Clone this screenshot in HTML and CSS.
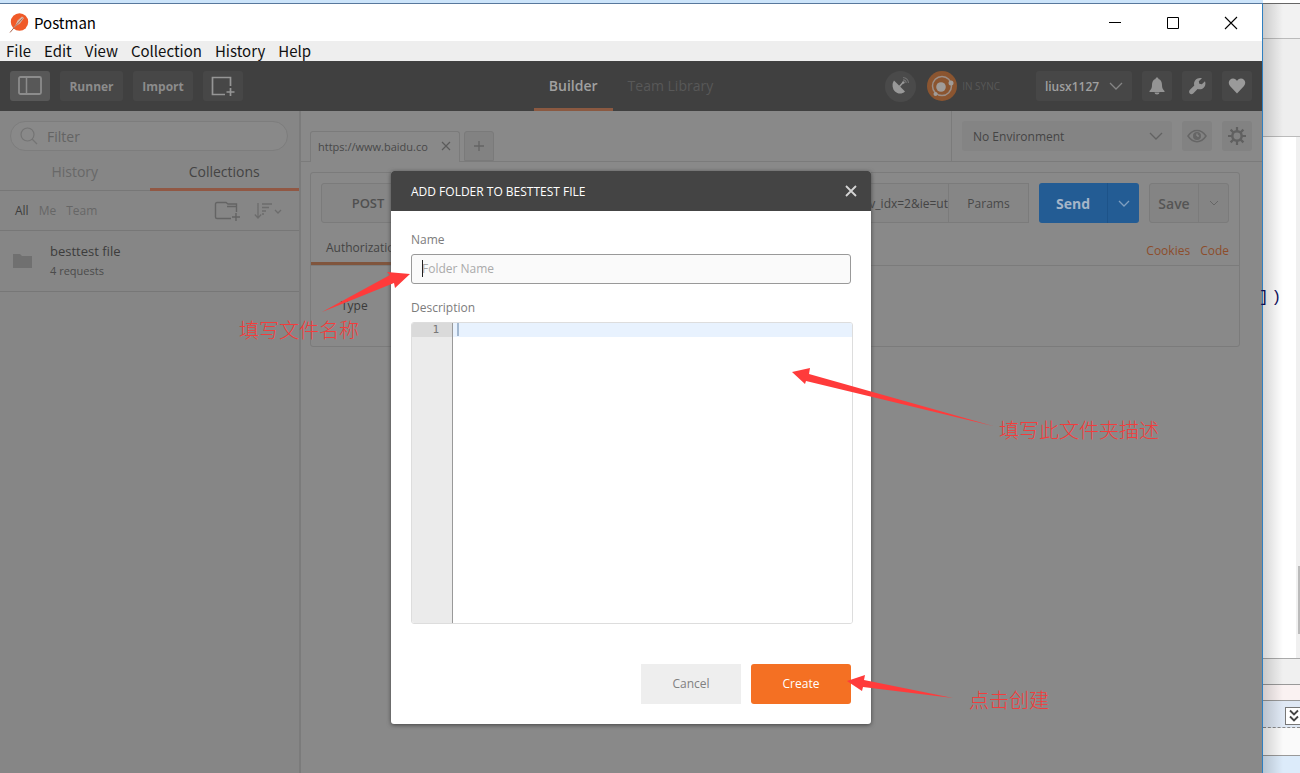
FILE: index.html
```html
<!DOCTYPE html>
<html lang="en">
<head>
<meta charset="utf-8">
<title>Postman</title>
<link rel="stylesheet" href="styles.css">
</head>
<body>
<div class="desktop">
  <div class="window">
    <header class="titlebar">
      <svg class="logo" width="20" height="20" viewBox="0 0 20 20"><circle cx="10.500" cy="9" r="8.700" fill="#f05a28"/><path d="M1 19.500 6.500 12l2-4.500L13 3.500l2 1.500-4 5.500-4 2.500z" fill="#d8b5a6"/><path d="m1 19.500 5.500-6.500 7-7.500" fill="none" stroke="#a86a55"/></svg>
      <span class="apptitle">Postman</span>
      <button class="winbtn" aria-label="Minimize"><svg width="14" height="14" viewBox="0 0 14 14"><path d="M1 6.500h12" stroke="#000"/></svg></button>
      <button class="winbtn" aria-label="Maximize"><svg width="14" height="14" viewBox="0 0 14 14"><path d="M1.500 1.500h11v11h-11z" fill="none" stroke="#000"/></svg></button>
      <button class="winbtn" aria-label="Close"><svg width="14" height="14" viewBox="0 0 14 14"><path d="m1 1 12 12M13 1 1 13" stroke="#000" stroke-width="1.100"/></svg></button>
    </header>
    <nav class="menubar"><span>File</span><span>Edit</span><span>View</span><span>Collection</span><span>History</span><span>Help</span></nav>
    <div class="toolbar">
      <div class="side left">
        <button class="tool active" aria-label="Toggle sidebar"><svg width="24" height="20" viewBox="0 0 24 20"><rect x="1" y="1" width="22" height="17" rx="1.500" fill="none" stroke="#8c8c8c" stroke-width="1.800"/><path d="M8.500 1v17" stroke="#8c8c8c" stroke-width="1.500"/></svg></button>
        <button class="tool runner">Runner</button>
        <button class="tool import">Import</button>
        <button class="tool" aria-label="New window"><svg width="24" height="20" viewBox="0 0 24 20"><path d="M19.500 10V1.500H1.500v17H14M19.500 12v8M15.500 16h8" fill="none" stroke="#959595" stroke-width="1.700"/></svg></button>
      </div>
      <div class="views"><button class="view on">Builder</button><button class="view">Team Library</button></div>
      <div class="side right">
        <button class="round dish" aria-label="Capture"><svg width="20" height="20" viewBox="0 0 20 20"><path d="M3 4.500 14 15.500c-3 3-7.500 2.500-10 0S.5 8 3 4.500z" fill="#999"/><path d="m8 11 4-4.500" stroke="#999" stroke-width="1.500"/><circle cx="12.300" cy="6.500" r="1.300" fill="#999"/><path d="M12 3.800a3.300 3.300 0 0 1 3.200 3.200M12 1.500a5.600 5.600 0 0 1 5.500 5.500" fill="none" stroke="#707070" stroke-width="1.200"/></svg></button>
        <button class="sync"><svg width="32" height="32" viewBox="0 0 32 32"><circle cx="16" cy="16" r="15" fill="#8b5530"/><circle cx="16" cy="16" r="9.500" fill="none" stroke="#9b8f88" stroke-width="1.500"/><circle cx="15" cy="17" r="4.800" fill="#a09c99"/><circle cx="25" cy="13" r="2.500" fill="#a09c99"/><circle cx="9.500" cy="24" r="2" fill="#a09c99"/></svg><span>IN SYNC</span></button>
        <button class="tool user">liusx1127<svg width="14" height="8" viewBox="0 0 14 8"><path d="m1 1 6 6 6-6" fill="none" stroke="#858585" stroke-width="1.300"/></svg></button>
        <button class="tool sq" aria-label="Notifications"><svg width="18" height="18" viewBox="0 0 18 18"><path d="M9 .5c1 0 1.500.7 1.500 1.500 2.500.8 3.500 3 3.500 6 0 3 .8 4.300 2.500 6v1h-15v-1C3.200 12.300 4 11 4 8c0-3 1-5.200 3.500-6C7.500 1.200 8 .5 9 .5zM6.500 15.500h5a2.500 2 0 0 1-5 0z" fill="#949494"/></svg></button>
        <button class="tool sq" aria-label="Settings"><svg width="18" height="18" viewBox="0 0 18 18"><path d="M14 1.200 10.800 4.200l.5 2.500 2.500.5 3.200-3c1.200 3.200-.2 6.500-3 7.700-1.500.6-3 .6-4.400.1l-4.400 4.500c-2.500 2-5.400-.9-3.500-3.500l4.600-4.400C5 4.300 8.700-.3 14 1.200z" fill="#949494"/></svg></button>
        <button class="tool sq" aria-label="Favorites"><svg width="18" height="18" viewBox="0 0 18 18"><path d="M9 16.500 2 9C-1 5 2 1.500 5 1.500c2 0 3.200 1 4 2.500.8-1.500 2-2.500 4-2.500 3 0 6 3.500 3 7.500z" fill="#9a9a9a"/></svg></button>
      </div>
    </div>

    <div class="workspace">
      <aside class="sidebar">
        <div class="filter"><svg width="20" height="20" viewBox="0 0 20 20"><circle cx="8.500" cy="8.500" r="6.500" fill="none" stroke="#747474" stroke-width="1.200"/><path d="m13 13 5 5" stroke="#747474" stroke-width="1.200"/></svg><input type="text" placeholder="Filter" aria-label="Filter"></div>
        <div class="sidetabs"><button>History</button><button class="on">Collections</button></div>
        <div class="scopes">
          <button class="on">All</button><button>Me</button><button>Team</button>
          <button class="newfolder" aria-label="New collection"><svg width="26" height="20" viewBox="0 0 26 20"><path d="M22.500 11V3H14l-2-1.500H3Q1.500 1.500 1.500 3v13Q1.500 17.500 3 17.500h14M13 5.500h9M22 12v8M18 16h8" fill="none" stroke="#646464" stroke-width="1.400"/></svg></button>
          <button aria-label="Sort"><svg width="28" height="18" viewBox="0 0 28 18"><path d="M4 1v15M.8 12.500 4 16l3.200-3.500M8 2h10M8 5.500h7M8 9h4M8 12h2" fill="none" stroke="#6c6c6c" stroke-width="1.300"/><path d="m21 8 3 3 3-3" fill="none" stroke="#6c6c6c" stroke-width="1.300"/></svg></button>
        </div>
        <div class="collection">
          <svg width="20" height="16" viewBox="0 0 20 16"><path d="M0 1h7l2 2h10v2H0zM0 5h19v10H0z" fill="#707070"/></svg>
          <div><div class="cname">besttest file</div><div class="ccount">4 requests</div></div>
        </div>
      </aside>

      <main class="main">
        <div class="tabrow">
          <div class="tabs">
            <div class="tab"><span>https://www.baidu.co</span><button aria-label="Close tab"><svg width="10" height="10" viewBox="0 0 10 10"><path d="m1 1 8 8M9 1 1 9" stroke="#5c5c5c" stroke-width="1.200"/></svg></button></div>
            <button class="addtab" aria-label="New tab"><svg width="10" height="10" viewBox="0 0 10 10"><path d="M5 0v10M0 5h10" stroke="#646464" stroke-width="1.300"/></svg></button>
          </div>
          <div class="env">
            <div class="envselect"><select aria-label="Environment"><option>No Environment</option></select><svg width="14" height="8" viewBox="0 0 14 8"><path d="m1 1 6 6 6-6" fill="none" stroke="#626262" stroke-width="1.300"/></svg></div>
            <button class="envbtn" aria-label="Quick look"><svg width="20" height="14" viewBox="0 0 20 14"><path d="M1 7c5-7.500 13-7.500 18 0-5 7.500-13 7.500-18 0z" fill="none" stroke="#666" stroke-width="1.500"/><circle cx="10" cy="7" r="4" fill="#666"/><path d="M10 4.500V7h2" stroke="#909090" fill="none"/></svg></button>
            <button class="envbtn" aria-label="Manage environments"><svg width="18" height="18" viewBox="0 0 18 18"><circle cx="9" cy="9" r="4.700" fill="none" stroke="#606060" stroke-width="2.500"/><path d="M9 0v4M9 14v4M0 9h4M14 9h4M2.600 2.600l3 3M12.400 12.400l3 3M15.400 2.600l-3 3M5.600 12.400l-3 3" stroke="#606060" stroke-width="2.200"/></svg></button>
          </div>
        </div>
        <section class="request">
          <div class="urlrow">
            <button class="method">POST</button>
            <div class="urlbox"><span>v_idx=2&amp;ie=ut</span></div>
            <button class="params">Params</button>
            <div class="send"><button class="go">Send</button><button class="drop" aria-label="Send options"><svg width="12" height="7" viewBox="0 0 12 7"><path d="m1 1 5 5 5-5" fill="none" stroke="#7f9fc0" stroke-width="1.300"/></svg></button></div>
            <div class="save"><button class="go">Save</button><button class="drop" aria-label="Save options"><svg width="10" height="6" viewBox="0 0 10 6"><path d="m1 1 4 4 4-4" fill="none" stroke="#666"/></svg></button></div>
          </div>
          <div class="reqtabs"><button class="auth">Authorization</button><div class="links"><a href="#">Cookies</a><a href="#">Code</a></div></div>
          <div class="authbody">Type</div>
        </section>
      </main>
    </div>

    <div class="overlay">
      <form class="modal" role="dialog" aria-labelledby="dlg-title">
        <div class="modalhead"><h1 id="dlg-title">ADD FOLDER TO BESTTEST FILE</h1><button type="button" aria-label="Close dialog"><svg width="12" height="12" viewBox="0 0 12 12"><path d="m1 1 10 10M11 1 1 11" stroke="#d5d5d5" stroke-width="1.800"/></svg></button></div>
        <div class="modalbody">
          <label for="fname">Name</label>
          <div class="namefield"><input id="fname" type="text" placeholder="Folder Name"><i class="caret"></i></div>
          <label for="fdesc">Description</label>
          <div class="editor"><div class="gutter"><span>1</span></div><div class="code"><textarea id="fdesc"></textarea></div></div>
          <div class="actions"><button type="button" class="cancel">Cancel</button><button type="button" class="create">Create</button></div>
        </div>
      </form>
    </div>
  </div>

  <div class="behind">
    <div class="b1"></div><div class="b2"></div><div class="b3"></div>
    <div class="page"><div class="scroll"><i></i></div><div class="snippet"><span>]</span><span>)</span></div></div>
    <div class="b4"></div><div class="b5"></div>
    <div class="b6"><button aria-label="Expand"><svg width="12" height="14" viewBox="0 0 12 14"><path d="m2 1.500 4 4 4-4M2 7.500l4 4 4-4" fill="none" stroke="#444" stroke-width="1.800"/></svg></button></div>
    <div class="b7"></div><div class="b8"></div>
  </div>

  <div class="notes" lang="zh-CN">
    <svg width="1300" height="773" viewBox="0 0 1300 773"><g fill="#ff3b3b"><path d="m322 312 68-37-3-3 23 2-15 14-1-5z"/><path d="m792 372 18-4-1 6 184 52-187-45-1 3z"/><path d="m847 681 18-6-1 5 89 18-90-11-1 4z"/></g></svg>
    <p class="n1">填写文件名称</p>
    <p class="n2">填写此文件夹描述</p>
    <p class="n3">点击创建</p>
  </div>
</div>
</body>
</html>
```
FILE: styles.css
```css
* { box-sizing: border-box; }
body { margin: 0; font-family: "Open Sans", sans-serif; font-size: 12px; color: #444; }
button, input, select, textarea { font: inherit; color: inherit; border: 0; background: none; padding: 0; margin: 0; outline: 0; }
svg { display: block; flex: none; }
.desktop { position: relative; display: flex; min-height: 100vh; overflow: hidden; background: #cce4fa; }
.window { position: relative; flex: 1; display: flex; flex-direction: column; margin-top: 3px; border-top: 1px solid #58789c; border-right: 1px solid #2f7fc0; background: #fff; min-width: 0; }

.titlebar { height: 37px; display: flex; align-items: center; padding: 0 2px 0 9px; background: #fff; font: 15px "Noto Sans CJK SC", sans-serif; color: #000; }
.apptitle { flex: 1; margin-left: 5px; }
.winbtn { width: 58px; height: 36px; display: grid; place-items: center; }
.menubar { height: 20px; display: flex; align-items: center; gap: 13px; padding-left: 6px; background: #eee; font: 15px/20px "Noto Sans CJK SC", sans-serif; color: #111; }

.toolbar { height: 50px; display: flex; align-items: center; background: #404040; }
.side { flex: 1; display: flex; align-items: center; gap: 10px; }
.left { padding-left: 10px; }
.right { justify-content: flex-end; padding-right: 10px; }
.tool { height: 30px; min-width: 40px; display: flex; align-items: center; justify-content: center; border-radius: 3px; background: #474747; color: #8c8c8c; font-weight: 700; }
.tool.active { background: #585858; }
.tool.runner { width: 63px; }
.tool.import { width: 60px; }
.tool.sq { min-width: 30px; }
.tool.user { width: 96px; gap: 10px; font-weight: 600; color: #a0a0a0; }
.round { width: 31px; height: 31px; border-radius: 50%; background: #4a4a4a; display: grid; place-items: center; }
.sync { display: flex; align-items: center; gap: 4px; margin-right: 26px; font-size: 10px; color: #585858; }
.views { display: flex; height: 50px; font-size: 14px; }
.view { padding: 2px 15px 0; color: #585858; border-bottom: 3px solid transparent; }
.view.on { color: #a0a0a0; font-weight: 600; border-color: #8b5941; }

.workspace { flex: 1; display: flex; background: #898989; }
.sidebar { width: 301px; flex: none; background: #868686; border-right: 2px solid #7b7b7b; }
.filter { margin: 10px 11px 0 10px; height: 30px; display: flex; align-items: center; gap: 8px; padding-left: 8px; border: 1px solid #7d7d7d; border-radius: 15px; background: #898989; }
.filter input { flex: 1; font-size: 14px; min-width: 0; }
.filter input::placeholder { color: #646464; opacity: 1; }
.sidetabs { display: flex; height: 40px; border-bottom: 1px solid #777; font-size: 14px; }
.sidetabs button { flex: 1; color: #686868; height: 40px; padding-top: 4px; border-bottom: 3px solid transparent; }
.sidetabs .on { color: #444; border-color: #915844; }
.scopes { height: 40px; display: flex; align-items: center; gap: 10px; padding: 0 17px 0 15px; border-bottom: 1px solid #777; color: #666; }
.scopes .on { color: #3c3c3c; }
.newfolder { margin-left: auto; margin-right: 4px; }
.collection { display: flex; align-items: center; gap: 17px; height: 61px; padding-left: 13px; border-bottom: 1px solid #777; }
.cname { font-size: 13px; line-height: 20px; color: #3c3c3c; }
.ccount { font-size: 11px; line-height: 20px; color: #4b4b4b; }

.main { flex: 1; min-width: 0; }
.tabrow { display: flex; height: 51px; border-bottom: 1px solid #7b7b7b; }
.tabs { flex: 1; display: flex; gap: 4px; align-items: flex-end; padding-left: 9px; }
.tab { width: 150px; height: 31px; display: flex; align-items: center; justify-content: space-between; padding: 0 8px 2px 7px; border: 1px solid #7b7b7b; border-bottom: 0; border-radius: 3px 3px 0 0; background: #898989; margin-bottom: -1px; font-size: 11px; color: #484848; }
.addtab { width: 30px; height: 30px; display: grid; place-items: center; background: #828282; border: 1px solid #7a7a7a; border-radius: 3px 3px 0 0; }
.env { flex: none; width: 311px; display: flex; gap: 10px; align-items: center; border-left: 1px solid #7b7b7b; padding: 0 10px; }
.envselect { flex: 1; height: 30px; display: flex; align-items: center; padding: 0 9px 0 11px; background: #848484; border-radius: 3px; }
.envselect select { flex: 1; appearance: none; color: #444; }
.envbtn { width: 30px; height: 30px; display: grid; place-items: center; background: #828282; border-radius: 3px; }

.request { margin: 10px 22px 0 9px; height: 175px; border: 1px solid #7b7b7b; border-radius: 3px; }
.urlrow { display: flex; height: 40px; margin: 10px 10px 0; }
.method { width: 94px; border: 1px solid #7b7b7b; border-radius: 3px 0 0 3px; background: #868686; font-size: 13px; font-weight: 600; color: #505050; }
.urlbox { flex: 1; display: flex; justify-content: flex-end; align-items: center; border: 1px solid #7b7b7b; border-width: 1px 0; background: #868686; color: #444; overflow: hidden; }
.params { width: 81px; border: 1px solid #7b7b7b; background: #868686; color: #484848; }
.send, .save { display: flex; margin-left: 10px; border-radius: 3px; font-size: 14px; }
.send { width: 100px; background: #235c94; color: #a5b5c8; font-weight: 700; }
.save { width: 80px; border: 1px solid #7b7b7b; background: #848484; color: #555; font-weight: 600; }
.go { flex: 1; }
.drop { width: 32px; display: grid; place-items: center; border-left: 1px solid #1d5389; }
.save .drop { width: 30px; border-color: #7b7b7b; }
.reqtabs { height: 43px; display: flex; justify-content: space-between; border-bottom: 1px solid #7b7b7b; }
.auth { padding: 9px 15px 0; border-bottom: 3px solid #80553d; height: 42px; color: #444; }
.links { display: flex; align-items: center; gap: 10px; padding: 12px 10px 0 0; }
.links a { color: #8d4d2b; text-decoration: none; }
.authbody { padding: 31px 30px; color: #3a3a3a; }

.overlay { position: absolute; top: 167px; left: 0; right: 0; display: flex; justify-content: center; }
.modal { width: 480px; border-radius: 3px; background: #fff; box-shadow: 0 1px 4px #444; overflow: hidden; }
.modalhead { height: 40px; display: flex; align-items: center; justify-content: space-between; padding: 0 14px 0 20px; background: #444; color: #fff; }
.modalhead h1 { margin: 0; font-size: 12px; font-weight: 500; }
.modalbody { padding: 20px; color: #7c7c7c; }
.modalbody label { display: block; line-height: 18px; margin-bottom: 5px; }
.namefield { position: relative; margin-bottom: 15px; }
.namefield input { width: 100%; height: 30px; padding: 0 10px 2px; border: 1px solid #999; border-radius: 3px; background: #fafafa; }
.namefield input::placeholder { color: #aaa; opacity: 1; }
.caret { position: absolute; left: 11px; top: 6px; width: 1px; height: 17px; background: #222; }
.editor { display: flex; height: 302px; margin-right: -2px; border: 1px solid #ddd; border-radius: 3px; overflow: hidden; }
.gutter { width: 41px; background: #ebebeb; border-right: 1px solid #999; font: 11px/14px "DejaVu Sans Mono", monospace; text-align: right; color: #777; }
.gutter span { display: block; padding-right: 13px; background: #dadada; }
.code { flex: 1; padding-left: 4px; background: linear-gradient(#e8f2fe 14px, #fff 14px); }
.code textarea { display: block; width: 100%; height: 100%; resize: none; border-left: 2px solid; border-image: linear-gradient(#a3b8d0 14px, transparent 14px) 1; }
.actions { display: flex; justify-content: flex-end; gap: 10px; margin-top: 40px; }
.actions button { width: 100px; height: 40px; padding-bottom: 2px; border-radius: 3px; }
.actions .cancel { background: #eee; color: #808080; border-radius: 0; }
.create { background: #f47023; color: #fff; font-weight: 500; }

.behind { width: 37px; flex: none; display: flex; flex-direction: column; position: relative; background: #fff; }
.behind::after { content: ""; position: absolute; inset: 4px auto 0 0; width: 20px; background: linear-gradient(90deg, rgba(0,0,0,.16), transparent); }
.b1 { height: 4px; border-bottom: 1px solid #666; }
.b2 { height: 35px; background: #f2f2f2; border-bottom: 1px solid #bbb; }
.b3 { height: 98px; background: #eee; border-bottom: 1px solid #bbb; }
.page { position: relative; flex: 1; display: flex; justify-content: flex-end; border-bottom: 1px solid #aaa; }
.scroll { width: 4px; padding: 429px 0 0 2px; background: #f0f0f0; }
.scroll i { display: block; height: 68px; background: #bbb; }
.snippet { position: absolute; left: -4px; top: 151px; display: flex; gap: 3px; font: 16px/20px "Liberation Mono", monospace; color: #10105c; }
.b4 { height: 26px; background: #f0f0f0; border-bottom: 1px solid #999; }
.b5 { height: 16px; background: #faf2f2; border-bottom: 1px solid #999; }
.b6 { height: 27px; display: flex; justify-content: flex-end; align-items: flex-end; padding-bottom: 2px; background: #dfe8f4; border-bottom: 1px dashed #888; }
.b6 button { width: 15px; height: 18px; padding-left: 2px; border: 1px solid #777; border-right: 0; background: #fff; }
.b7 { height: 28px; background: #fafafa; border-bottom: 1px solid #999; }
.b8 { height: 17px; background: #dcebfa; }

.notes { position: absolute; inset: 0; pointer-events: none; font: 300 20px/24px "Noto Sans CJK SC", sans-serif; color: #f33c3c; }
.notes p { position: absolute; margin: 0; white-space: nowrap; }
.n1 { left: 239px; top: 318px; }
.n2 { left: 999px; top: 418px; }
.n3 { left: 969px; top: 688px; }
```
